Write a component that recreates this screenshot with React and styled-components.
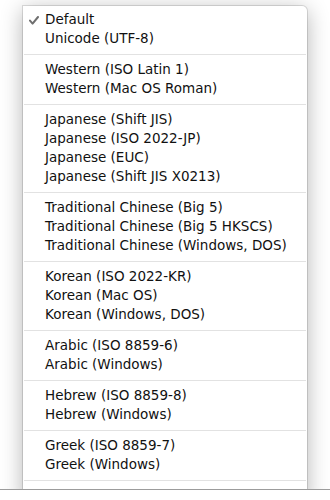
import React from "react";
import styled, { createGlobalStyle } from "styled-components";

const groups = [
  [
    { label: "Default", checked: true },
    { label: "Unicode (UTF-8)" },
  ],
  [{ label: "Western (ISO Latin 1)" }, { label: "Western (Mac OS Roman)" }],
  [
    { label: "Japanese (Shift JIS)" },
    { label: "Japanese (ISO 2022-JP)" },
    { label: "Japanese (EUC)" },
    { label: "Japanese (Shift JIS X0213)" },
  ],
  [
    { label: "Traditional Chinese (Big 5)" },
    { label: "Traditional Chinese (Big 5 HKSCS)" },
    { label: "Traditional Chinese (Windows, DOS)" },
  ],
  [
    { label: "Korean (ISO 2022-KR)" },
    { label: "Korean (Mac OS)" },
    { label: "Korean (Windows, DOS)" },
  ],
  [{ label: "Arabic (ISO 8859-6)" }, { label: "Arabic (Windows)" }],
  [{ label: "Hebrew (ISO 8859-8)" }, { label: "Hebrew (Windows)" }],
  [{ label: "Greek (ISO 8859-7)" }, { label: "Greek (Windows)" }],
  [{ label: "Cyrillic (ISO 8859-5)", faded: true }],
];

const GlobalStyle = createGlobalStyle`
  html, body {
    margin: 0;
    padding: 0;
    background: #ffffff;
  }
  body {
    font-family: "DejaVu Sans", "Liberation Sans", sans-serif;
  }
`;

const Stage = styled.div`
  width: 330px;
  height: 490px;
  overflow: hidden;
  padding: 6px 0 0 23px;
  box-sizing: border-box;
  border-bottom: 1px solid #9c9c9c;
  background: #ffffff;
`;

const Menu = styled.ul`
  list-style: none;
  margin: 0;
  width: 284px;
  padding: 4px 0 0;
  background: #ffffff;
  border-radius: 0 5px 0 0;
  box-shadow: 0 0 0 1px rgba(0, 0, 0, 0.12), 0 4px 22px rgba(0, 0, 0, 0.3);
`;

const Item = styled.li`
  position: relative;
  height: 19px;
  line-height: 19px;
  padding-left: 22px;
  font-size: 13.5px;
  color: ${(p) => (p.$faded ? "#c8c8c8" : "#111111")};
  white-space: nowrap;
`;

const Check = styled.svg`
  position: absolute;
  left: 6px;
  top: 6px;
`;

const Separator = styled.li`
  height: 12px;
  display: flex;
  align-items: center;
  padding: 0 1px;

  &::after {
    content: "";
    flex: 1;
    height: 1px;
    margin-top: 1px;
    background: #e2e2e2;
  }
`;

export default function App() {
  return (
    <>
      <GlobalStyle />
      <Stage>
        <Menu>
          {groups.map((group, gi) => (
            <React.Fragment key={gi}>
              {gi > 0 && <Separator />}
              {group.map((item) => (
                <Item key={item.label} $faded={item.faded}>
                  {item.checked && (
                    <Check width="10" height="9" viewBox="0 0 10 9">
                      <path
                        d="M1 4.6 L3.6 7.6 L9 1"
                        fill="none"
                        stroke="#6f6f6f"
                        strokeWidth="2"
                        strokeLinecap="round"
                        strokeLinejoin="round"
                      />
                    </Check>
                  )}
                  {item.label}
                </Item>
              ))}
            </React.Fragment>
          ))}
        </Menu>
      </Stage>
    </>
  );
}
